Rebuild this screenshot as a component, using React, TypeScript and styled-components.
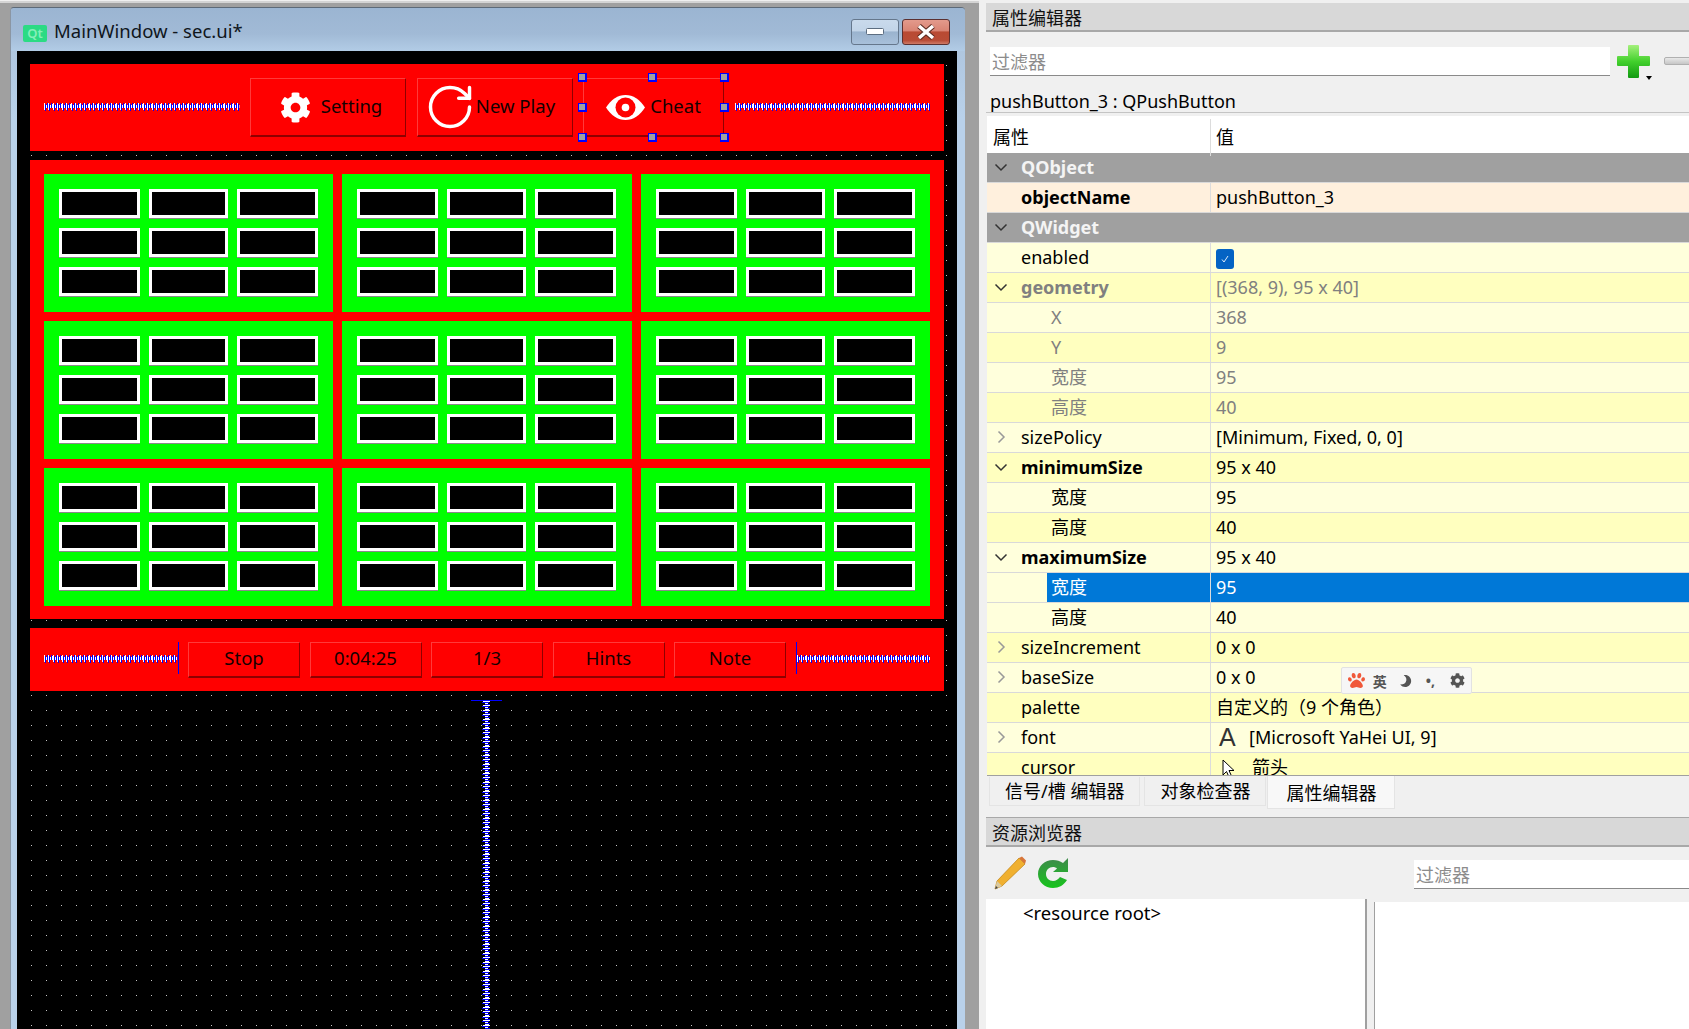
import React from "react";
import styled, { createGlobalStyle } from "styled-components";
import { FaCog, FaMoon, FaPaw } from "react-icons/fa";
import { RotateCw } from "lucide-react";

const FONT = `"Noto Sans", "Noto Sans CJK SC", sans-serif`;

const GlobalStyle = createGlobalStyle`
  html, body {
    margin: 0;
    padding: 0;
    height: 100%;
    overflow: hidden;
    background: #f0f0f0;
  }
  #root {
    height: 100%;
  }
`;

const Screen = styled.div`
  width: 1689px;
  height: 1029px;
  display: flex;
  overflow: hidden;
  font-family: ${FONT};
  color: #000;
`;

const DesignArea = styled.div`
  width: 979px;
  flex: none;
  box-sizing: border-box;
  padding: 4px 14px 0 10px;
  background: #a0a0a0;
  border-top: 2px solid #d4d4d4;
  margin-top: 1px;
`;

const Window = styled.div`
  height: 100%;
  display: flex;
  flex-direction: column;
  border-top: 1px solid #5d6a78;
  border-left: 1px solid #8b96a3;
  box-sizing: border-box;
  background: linear-gradient(#a9c0d9 0, #b9d1ea 110px);
  border-radius: 4px 4px 0 0;
`;

const TitleBar = styled.div`
  height: 43px;
  flex: none;
  display: flex;
  align-items: center;
  padding: 0 15px 0 12px;
  background: linear-gradient(#9bb5d2, #a1bad6 60%, #b2cce6);
  border-radius: 4px 4px 0 0;
`;

const QtLogo = styled.div`
  width: 24px;
  height: 17px;
  margin-top: 8px;
  display: flex;
  align-items: center;
  justify-content: center;
  background: #2bdb84;
  border-radius: 2px;
  color: #86eeb9;
  font-size: 13px;
  font-weight: 600;
  line-height: 1;
`;

const WindowTitle = styled.div`
  margin-left: 7px;
  flex: 1;
  font-size: 18.5px;
  color: #10161c;
  margin-top: 1px;
`;

const CaptionButton = styled.div<{ $close?: boolean }>`
  width: 46px;
  height: 24px;
  margin-left: 3px;
  margin-top: 5px;
  display: flex;
  align-items: center;
  justify-content: center;
  border: 1px solid ${(p) => (p.$close ? "#5b3030" : "#65778c")};
  border-radius: 3px;
  background: ${(p) =>
    p.$close
      ? "linear-gradient(#e39a8c 0, #d98474 45%, #b94a33 50%, #b84c36 85%, #cf7a66 100%)"
      : "linear-gradient(#c9daec 0, #c2d4e8 45%, #9ab3ce 50%, #a8c0da 100%)"};
`;

const Client = styled.div`
  flex: 1;
  min-height: 0;
  margin: 0 8px 0 6px;
  padding: 13px 13px 0;
  display: flex;
  flex-direction: column;
  gap: 9px;
  overflow: hidden;
  background-color: #000;
  background-image: conic-gradient(from 270deg at 1px 1px, #c4c4c4 90deg, transparent 0);
  background-size: 15px 15px;
  background-position: 14px 14px;
`;

const ToolBar = styled.div<{ $h: number; $gap: number }>`
  height: ${(p) => p.$h}px;
  flex: none;
  display: flex;
  align-items: center;
  gap: ${(p) => p.$gap}px;
  padding: 0 14px;
  background: #f00;
`;

const SpringBox = styled.div<{ $cap?: "left" | "right" }>`
  flex: 1;
  min-width: 0;
  height: ${(p) => (p.$cap ? "32px" : "8px")};
  margin-top: -3px;
  display: flex;
  align-items: center;
  border-${(p) => p.$cap ?? "left"}: ${(p) => (p.$cap ? "1px solid #00f" : "0 none")};
  svg {
    display: block;
    width: 100%;
    height: 9px;
  }
`;

const GameButton = styled.div<{ $w: number; $h: number; $iconGap?: number; $padL?: number; $padR?: number }>`
  position: relative;
  width: ${(p) => p.$w}px;
  height: ${(p) => p.$h}px;
  flex: none;
  box-sizing: border-box;
  padding: 0 ${(p) => p.$padR ?? 0}px 0 ${(p) => p.$padL ?? 0}px;
  display: flex;
  align-items: center;
  justify-content: center;
  gap: ${(p) => p.$iconGap ?? 0}px;
  background: #f00;
  border: 1px solid #ff3a3a;
  border-right: 1px solid #8f0000;
  border-bottom: 2px solid #8f0000;
  font-size: 18.5px;
  color: #140000;
  svg {
    flex: none;
  }
`;

const ButtonLabel = styled.span`
  margin-bottom: 4px;
  white-space: nowrap;
`;

const ReloadIcon = styled(RotateCw)`
  margin: 0 -5px;
`;

const Handle = styled.span<{ $x: number; $y: number }>`
  position: absolute;
  left: ${(p) => p.$x}px;
  top: ${(p) => p.$y}px;
  width: 9px;
  height: 9px;
  box-sizing: border-box;
  background: #a0a0a0;
  border: 1px solid #00f;
  border-right-width: 2px;
  border-bottom-width: 2px;
`;

const GamePanel = styled.div`
  flex: none;
  display: grid;
  grid-template-columns: repeat(3, 1fr);
  grid-template-rows: repeat(3, 138px);
  gap: 9px;
  padding: 14px 14px 13px;
  background: #f00;
`;

const Block = styled.div`
  display: grid;
  grid-template-columns: 81px 79px 81px;
  grid-template-rows: repeat(3, 30px);
  gap: 9px;
  padding: 15px;
  background: #0f0;
`;

const Cell = styled.div`
  height: 29px;
  box-sizing: border-box;
  background: #000;
  border: 3px solid #fff;
  box-shadow: 0 1px 0 #8a8a8a;
`;

const SpacerArea = styled.div`
  flex: 1;
  min-height: 0;
  display: flex;
  flex-direction: column;
  align-items: center;
  padding-right: 2px;
`;

const SpringCap = styled.div`
  width: 31px;
  height: 1px;
  flex: none;
  background: #00f;
`;

const VerticalSpring = styled.svg`
  width: 9px;
  flex: 1;
  display: block;
`;

const SidePanel = styled.div`
  flex: 1;
  min-width: 0;
  padding: 3px 0 0 7px;
  display: flex;
  flex-direction: column;
  background: #f0f0f0;
  overflow: hidden;
`;

const DockTitle = styled.div<{ $top?: boolean }>`
  height: ${(p) => (p.$top ? 30 : 29)}px;
  flex: none;
  box-sizing: border-box;
  padding-left: 6px;
  display: flex;
  align-items: center;
  background: #d8d8d8;
  border-bottom: 2px solid #a8a8a8;
  border-top: ${(p) => (p.$top ? "1px solid #a8a8a8" : "0 none")};
  font-size: 18px;
  color: #111;
`;

const FilterRow = styled.div`
  height: 33px;
  margin-top: 13px;
  display: flex;
  align-items: flex-start;
  padding-left: 4px;
  flex: none;
`;

const FilterBox = styled.div<{ $w?: number }>`
  height: 29px;
  width: ${(p) => (p.$w ? `${p.$w}px` : "auto")};
  flex: none;
  margin-top: 2px;
  box-sizing: border-box;
  padding-left: 2px;
  display: flex;
  align-items: center;
  background: #fff;
  border-bottom: 1px solid #8a8a8a;
  color: #8c8c8c;
  font-size: 18px;
`;

const PlusSlot = styled.div`
  flex: none;
  margin: -1px 0 0 7px;
`;

const MinusIcon = styled.div`
  width: 40px;
  height: 8px;
  flex: none;
  margin: 12px 0 0 10px;
  box-sizing: border-box;
  background: linear-gradient(#e8e8e8, #c6c6c6);
  border: 1px solid #b0b0b0;
  border-radius: 2px;
`;

const ObjectLabel = styled.div`
  height: 35px;
  flex: none;
  box-sizing: border-box;
  padding: 12px 0 0 4px;
  display: flex;
  align-items: center;
  border-bottom: 1px solid #c4c4c4;
  font-size: 18px;
  margin-bottom: 3px;
`;

const Table = styled.div`
  position: relative;
  height: 660px;
  flex: none;
  box-sizing: border-box;
  overflow: hidden;
  border-bottom: 1px solid #a0a0a0;
  margin-left: 1px;
`;

const Row = styled.div<{ $bg: string }>`
  height: 30px;
  box-sizing: border-box;
  display: grid;
  grid-template-columns: 224px 1fr;
  background: ${(p) => p.$bg};
  border-bottom: 1px solid #d9d9d9;
  font-size: 18px;
  line-height: 29px;
`;

const HeaderRow = styled(Row)`
  height: 37px;
  padding-top: 3px;
  border-bottom: 0 none;
  line-height: 37px;
`;

const NameCell = styled.div<{ $depth: number; $bold?: boolean; $color: string; $group?: boolean }>`
  position: relative;
  padding-left: ${(p) => (p.$depth === 2 ? 64 : p.$depth === 0 ? 6 : 34)}px;
  border-right: 1px solid ${(p) => (p.$group ? "transparent" : "#dcdcdc")};
  font-weight: ${(p) => (p.$bold ? 700 : 400)};
  color: ${(p) => p.$color};
  white-space: nowrap;
`;

const SelectedName = styled.span`
  position: absolute;
  left: 60px;
  right: 0;
  top: 0;
  bottom: 0;
  padding-left: 4px;
  background: #0078d7;
  color: #fff;
`;

const Expander = styled.span`
  position: absolute;
  left: 7px;
  top: 7px;
  display: flex;
`;

const ValueCell = styled.div<{ $color: string; $sel?: boolean }>`
  padding-left: 5px;
  display: flex;
  align-items: center;
  color: ${(p) => p.$color};
  background: ${(p) => (p.$sel ? "#0078d7" : "transparent")};
  white-space: nowrap;
`;

const CheckBox = styled.span`
  width: 18px;
  height: 20px;
  margin-top: 2px;
  display: flex;
  align-items: center;
  justify-content: center;
  border-radius: 3px;
  background: #0463c4;
`;

const FontGlyph = styled.span`
  width: 27px;
  margin: 0 3px 0 3px;
  font-family: "Liberation Sans", sans-serif;
  font-size: 25px;
  color: #333;
`;

const CursorGlyph = styled.span`
  width: 27px;
  margin: 6px 3px 0 6px;
  display: flex;
  align-self: flex-start;
`;

const ImeBar = styled.div`
  position: absolute;
  left: 354px;
  top: 551px;
  width: 131px;
  height: 27px;
  box-sizing: border-box;
  padding-left: 6px;
  display: flex;
  align-items: center;
  background: #f6f6f6;
  border: 1px solid #e2e2e2;
  border-radius: 2px;
  color: #555;
  font-size: 14px;
  font-weight: 700;
`;

const ImeSlot = styled.span<{ $w: number; $color?: string; $flip?: boolean }>`
  width: ${(p) => p.$w}px;
  display: flex;
  justify-content: center;
  color: ${(p) => p.$color ?? "#555"};
  transform: ${(p) => (p.$flip ? "scaleX(-1)" : "none")};
`;

const TabStrip = styled.div`
  height: 41px;
  flex: none;
  box-sizing: border-box;
  padding-left: 3px;
  display: flex;
  align-items: flex-start;
  gap: 4px;
`;

const Tab = styled.div<{ $active?: boolean }>`
  height: ${(p) => (p.$active ? 33 : 29)}px;
  margin-top: ${(p) => (p.$active ? 0 : 1)}px;
  margin-left: ${(p) => (p.$active ? -3 : 0)}px;
  box-sizing: border-box;
  padding: 0 ${(p) => (p.$active ? 18 : 15)}px ${(p) => (p.$active ? 1 : 3)}px;
  display: flex;
  align-items: center;
  background: ${(p) => (p.$active ? "#f8f8f8" : "#f0f0f0")};
  border: 1px solid #e4e4e4;
  border-top: 0 none;
  font-size: 18px;
  white-space: nowrap;
`;

const ResourceTools = styled.div`
  height: 52px;
  flex: none;
  display: flex;
  align-items: center;
  padding-left: 7px;
  gap: 10px;
`;

const ResourceFilter = styled.div`
  margin-left: auto;
  width: 275px;
  margin-top: 1px;
`;

const ResourcePanes = styled.div`
  flex: 1;
  min-height: 0;
  display: grid;
  grid-template-columns: 381px 7px 1fr;
`;

const ResourceTree = styled.div`
  background: #fff;
  border-right: 2px solid #a0a0a0;
  padding: 1px 0 0 37px;
  font-size: 18.5px;
`;

const ResourceFiles = styled.div`
  grid-column: 3;
  margin-top: 3px;
  background: #fff;
  border-left: 1px solid #a0a0a0;
`;

const Chevron = ({ open, color = "#444" }: { open?: boolean; color?: string }) => (
  <svg width="14" height="14" viewBox="0 0 14 14" fill="none" stroke={color} strokeWidth="1.5">
    {open ? <path d="M1.5 4.5 7 10l5.5-5.5" /> : <path d="M4.5 1.5 10 7l-5.5 5.5" />}
  </svg>
);

// one repeat holds two teeth of the designer's spacer coil
const SpringPattern = ({ id, vertical }: { id: string; vertical?: boolean }) => (
  <defs>
    <pattern
      id={id}
      width="9"
      height="9"
      patternUnits="userSpaceOnUse"
      patternTransform={vertical ? "rotate(90)" : undefined}
    >
      <rect x="0" y="1" width="1" height="7" fill="#fff" />
      <rect x="1" y="2" width="1" height="7" fill="#00f" />
      <rect x="2" y="3" width="1" height="3" fill="#fff" />
      <rect x="3" y="1" width="1" height="5" fill="#00f" />
      <rect x="4" y="1" width="1" height="7" fill="#fff" />
      <rect x="5" y="2" width="1" height="7" fill="#00f" />
      <rect x="6" y="3" width="1" height="3" fill="#fff" />
      <rect x="7" y="1" width="1" height="5" fill="#00f" />
      <rect x="8" y="2" width="1" height="4" fill="#fff" />
    </pattern>
  </defs>
);

const Spring = ({ id, cap }: { id: string; cap?: "left" | "right" }) => (
  <SpringBox $cap={cap}>
    <svg>
      <SpringPattern id={id} />
      <rect width="100%" height="100%" fill={`url(#${id})`} />
    </svg>
  </SpringBox>
);

const EyeIcon = () => (
  <svg width="39" height="25" viewBox="0 0 39 25">
    <path d="M0 12.5C5 4.5 12 0 19.5 0S34 4.5 39 12.5C34 20.5 27 25 19.5 25S5 20.5 0 12.5Z" fill="#fff" />
    <circle cx="19.5" cy="12.5" r="10" fill="#f00" />
    <circle cx="19.5" cy="12.5" r="3.8" fill="#fff" />
  </svg>
);

const PlusIcon = () => (
  <svg width="37" height="36" viewBox="0 0 37 36">
    <defs>
      <linearGradient id="plusFill" x1="0" y1="0" x2="0" y2="1">
        <stop offset="0" stopColor="#a4f07c" />
        <stop offset="0.5" stopColor="#42d02c" />
        <stop offset="1" stopColor="#129a12" />
      </linearGradient>
    </defs>
    <path
      d="M12 1h9a1 1 0 0 1 1 1v10h10a1 1 0 0 1 1 1v8a1 1 0 0 1-1 1H22v11a1 1 0 0 1-1 1h-9a1 1 0 0 1-1-1V22H1a1 1 0 0 1-1-1v-8a1 1 0 0 1 1-1h10V2a1 1 0 0 1 1-1Z"
      fill="url(#plusFill)"
    />
    <path d="M29 32h6l-3 4Z" fill="#000" />
  </svg>
);

const PencilIcon = () => (
  <svg width="34" height="34" viewBox="0 0 34 34">
    <path d="M26 2 32 8 9 30 2 33l2-8Z" fill="#f0b030" stroke="#c78a1c" strokeWidth="0.8" />
    <path d="M26 2l3-1.500 4 4L32 8Z" fill="#d8763a" />
    <path d="M4 25l5 5-7 3Z" fill="#d9c9a0" />
    <path d="M2 33l1-3 2 2Z" fill="#444" />
  </svg>
);

const RefreshIcon = () => (
  <svg width="32" height="32" viewBox="0 0 32 32">
    <defs>
      <linearGradient id="refreshFill" x1="0" y1="0" x2="0" y2="1">
        <stop offset="0" stopColor="#3f8a4c" />
        <stop offset="1" stopColor="#17c41c" />
      </linearGradient>
    </defs>
    <path
      d="M16 3C8 3 1 9 1 17s7 14 15 14c6 0 11-3 14-8l-7-3c-1.500 2-4 4-7 4-4 0-7-3-7-7s3-7 7-7c1.500 0 3 .5 4 1.500L16 15h15V1l-5 5c-3-2-6-3-10-3Z"
      fill="url(#refreshFill)"
    />
  </svg>
);

const ArrowCursor = () => (
  <svg width="13" height="20" viewBox="0 0 13 20">
    <path d="M1 1v15l3.500-3.500L7 18l2.500-1-2.500-5.500h5Z" fill="#fff" stroke="#000" strokeWidth="1" />
  </svg>
);

const LIGHT = "#ffffdc";
const DARK = "#ffffbf";
const GROUP = "#a0a0a0";

type Prop = {
  name: string;
  value?: string;
  depth?: 0 | 1 | 2;
  bold?: boolean;
  muted?: boolean;
  arrow?: "open" | "closed";
  kind?: "check" | "font" | "cursor";
  selected?: boolean;
  bg?: string;
};

const props: Prop[] = [
  { name: "QObject", depth: 0, bold: true, arrow: "open", bg: GROUP },
  { name: "objectName", value: "pushButton_3", bold: true, bg: "#fff0dd" },
  { name: "QWidget", depth: 0, bold: true, arrow: "open", bg: GROUP },
  { name: "enabled", kind: "check", bg: LIGHT },
  { name: "geometry", value: "[(368, 9), 95 x 40]", bold: true, muted: true, arrow: "open", bg: DARK },
  { name: "X", value: "368", depth: 2, muted: true, bg: LIGHT },
  { name: "Y", value: "9", depth: 2, muted: true, bg: DARK },
  { name: "宽度", value: "95", depth: 2, muted: true, bg: LIGHT },
  { name: "高度", value: "40", depth: 2, muted: true, bg: DARK },
  { name: "sizePolicy", value: "[Minimum, Fixed, 0, 0]", arrow: "closed", bg: LIGHT },
  { name: "minimumSize", value: "95 x 40", bold: true, arrow: "open", bg: DARK },
  { name: "宽度", value: "95", depth: 2, bg: LIGHT },
  { name: "高度", value: "40", depth: 2, bg: DARK },
  { name: "maximumSize", value: "95 x 40", bold: true, arrow: "open", bg: LIGHT },
  { name: "宽度", value: "95", depth: 2, selected: true, bg: LIGHT },
  { name: "高度", value: "40", depth: 2, bg: LIGHT },
  { name: "sizeIncrement", value: "0 x 0", arrow: "closed", bg: DARK },
  { name: "baseSize", value: "0 x 0", arrow: "closed", bg: LIGHT },
  { name: "palette", value: "自定义的（9 个角色）", bg: DARK },
  { name: "font", value: "[Microsoft YaHei UI, 9]", kind: "font", arrow: "closed", bg: LIGHT },
  { name: "cursor", value: "箭头", kind: "cursor", bg: DARK },
];

const handles = [-6, 64, 136].flatMap((x) =>
  [-6, 24, 54].filter((y) => x !== 64 || y !== 24).map((y) => ({ x, y }))
);

const PropertyRow = ({ prop }: { prop: Prop }) => {
  const depth = prop.depth ?? 1;
  const group = depth === 0;
  const nameColor = group ? "#f4f4f4" : prop.muted ? "#808080" : "#000";
  const valueColor = prop.selected ? "#fff" : prop.muted ? "#808080" : "#000";
  return (
    <Row $bg={prop.bg ?? LIGHT}>
      <NameCell $depth={group ? 1 : depth} $bold={prop.bold} $color={nameColor} $group={group}>
        {prop.arrow && (
          <Expander>
            <Chevron open={prop.arrow === "open"} color={prop.arrow === "closed" ? "#999" : "#333"} />
          </Expander>
        )}
        {prop.selected ? <SelectedName>{prop.name}</SelectedName> : prop.name}
      </NameCell>
      <ValueCell $color={valueColor} $sel={prop.selected}>
        {prop.kind === "check" && (
          <CheckBox>
            <svg width="10" height="10" viewBox="0 0 10 10" fill="none" stroke="#dcebfa" strokeWidth="1">
              <path d="M2 5.500 4 8l4-6" />
            </svg>
          </CheckBox>
        )}
        {prop.kind === "font" && <FontGlyph>A</FontGlyph>}
        {prop.kind === "cursor" && (
          <CursorGlyph>
            <ArrowCursor />
          </CursorGlyph>
        )}
        {prop.value}
      </ValueCell>
    </Row>
  );
};

const App: React.FC = () => {
  return (
    <Screen>
      <GlobalStyle />
      <DesignArea>
        <Window>
          <TitleBar>
            <QtLogo>Qt</QtLogo>
            <WindowTitle>MainWindow - sec.ui*</WindowTitle>
            <CaptionButton>
              <svg width="18" height="8" viewBox="0 0 18 8">
                <rect x="0.5" y="0.5" width="17" height="6" rx="1" fill="#fff" stroke="#5c6d80" />
              </svg>
            </CaptionButton>
            <CaptionButton $close>
              <svg width="18" height="16" viewBox="0 0 18 16">
                <path d="M2 2 16 14M16 2 2 14" stroke="#5a2a20" strokeWidth="5.500" />
                <path d="M2 2 16 14M16 2 2 14" stroke="#fff" strokeWidth="3.500" />
              </svg>
            </CaptionButton>
          </TitleBar>
          <Client>
            <ToolBar $h={87} $gap={10.5}>
              <Spring id="springTopLeft" />
              <GameButton $w={156} $h={59} $iconGap={10} $padL={6}>
                <FaCog size={31} color="#fff" />
                <ButtonLabel>Setting</ButtonLabel>
              </GameButton>
              <GameButton $w={156} $h={59} $iconGap={5} $padR={5}>
                <ReloadIcon size={52} color="#fff" strokeWidth={1.6} />
                <ButtonLabel>New Play</ButtonLabel>
              </GameButton>
              <GameButton $w={141} $h={59} $iconGap={5}>
                <EyeIcon />
                <ButtonLabel>Cheat</ButtonLabel>
                {handles.map((h) => (
                  <Handle key={`${h.x}-${h.y}`} $x={h.x} $y={h.y} />
                ))}
              </GameButton>
              <Spring id="springTopRight" />
            </ToolBar>
            <GamePanel>
              {Array.from({ length: 9 }, (_, b) => (
                <Block key={b}>
                  {Array.from({ length: 9 }, (_, c) => (
                    <Cell key={c} />
                  ))}
                </Block>
              ))}
            </GamePanel>
            <ToolBar $h={63} $gap={9.5}>
              <Spring id="springBottomLeft" cap="right" />
              {["Stop", "0:04:25", "1/3", "Hints", "Note"].map((label) => (
                <GameButton key={label} $w={112} $h={36}>
                  <ButtonLabel>{label}</ButtonLabel>
                </GameButton>
              ))}
              <Spring id="springBottomRight" cap="left" />
            </ToolBar>
            <SpacerArea>
              <SpringCap />
              <VerticalSpring>
                <SpringPattern id="springMiddle" vertical />
                <rect width="100%" height="100%" fill="url(#springMiddle)" />
              </VerticalSpring>
            </SpacerArea>
          </Client>
        </Window>
      </DesignArea>
      <SidePanel>
        <DockTitle>属性编辑器</DockTitle>
        <FilterRow>
          <FilterBox $w={620}>过滤器</FilterBox>
          <PlusSlot>
            <PlusIcon />
          </PlusSlot>
          <MinusIcon />
        </FilterRow>
        <ObjectLabel>pushButton_3 : QPushButton</ObjectLabel>
        <Table>
          <HeaderRow $bg="#fff">
            <NameCell $depth={0} $color="#000">属性</NameCell>
            <ValueCell $color="#000">值</ValueCell>
          </HeaderRow>
          {props.map((prop, i) => (
            <PropertyRow key={i} prop={prop} />
          ))}
          <ImeBar>
            <ImeSlot $w={18} $color="#f0583a"><FaPaw size={17} /></ImeSlot>
            <ImeSlot $w={28}>英</ImeSlot>
            <ImeSlot $w={24} $flip><FaMoon size={12} /></ImeSlot>
            <ImeSlot $w={26}>•,</ImeSlot>
            <ImeSlot $w={28}><FaCog size={15} /></ImeSlot>
          </ImeBar>
        </Table>
        <TabStrip>
          <Tab>信号/槽 编辑器</Tab>
          <Tab>对象检查器</Tab>
          <Tab $active>属性编辑器</Tab>
        </TabStrip>
        <DockTitle $top>资源浏览器</DockTitle>
        <ResourceTools>
          <PencilIcon />
          <RefreshIcon />
          <ResourceFilter>
            <FilterBox>过滤器</FilterBox>
          </ResourceFilter>
        </ResourceTools>
        <ResourcePanes>
          <ResourceTree>&lt;resource root&gt;</ResourceTree>
          <ResourceFiles />
        </ResourcePanes>
      </SidePanel>
    </Screen>
  );
};

export default App;
